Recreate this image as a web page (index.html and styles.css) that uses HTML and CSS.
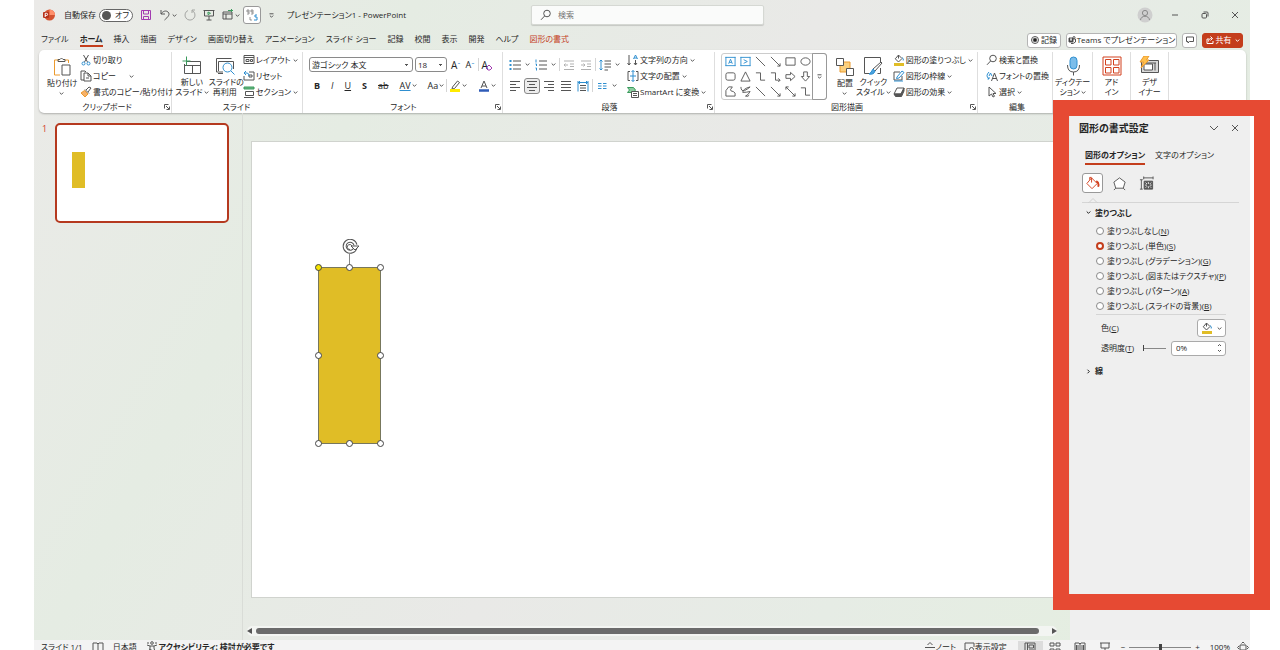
FILE: index.html
```
<!DOCTYPE html>
<html lang="ja">
<head>
  <meta charset="UTF-8">
  <title>プレゼンテーション1 - PowerPoint</title>
  <link rel="stylesheet" href="styles.css">
</head>
<body>
  <!-- 共通アイコン -->
  <svg class="defs" aria-hidden="true">
    <symbol id="chev" viewBox="0 0 5 5"><path d="M.7 1.5l1.8 1.8 1.8-1.8" /></symbol>
    <symbol id="launch" viewBox="0 0 6 6"><path d="M.5 4.5v-4h4M2 2l3 3M5.5 2.5v3h-3" /></symbol>
    <symbol id="search" viewBox="0 0 12 12"><circle cx="7" cy="4.5" r="3.3" /><path d="M4.6 7L1 10.8" /></symbol>
    <symbol id="bucket" viewBox="0 0 12 12"><path d="M5.5 1L9 4.5 5.5 8 2.3 4.8zM5.5 1v3.5" /><path class="b" d="M9 3.5q2 1 1.2 3" /><path class="gold" d="M1 10.5h10" /></symbol>
    <symbol id="line" viewBox="0 0 12 12"><path d="M1 1l10 10" /></symbol>
    <symbol id="arrow" viewBox="0 0 12 12"><path d="M1 1l10 10M11 8v3H8" /></symbol>
    <symbol id="elbow" viewBox="0 0 12 12"><path d="M1 2h5v8h5" /></symbol>
  </svg>

  <div class="app">
    <header class="titlebar">
      <svg class="logo" viewBox="0 0 12 12"><circle cx="6.5" cy="6" r="5.5" fill="#d35230" stroke="none" /><path d="M6.5.5A5.5 5.5 0 0 1 12 6H6.5z" fill="#ff8f6b" stroke="none" /><rect x="0" y="3" width="6" height="6" rx="1" fill="#b7321a" stroke="none" /><path d="M2.2 8V4.3h1.3a1 1 0 0 1 0 2.2H2.2" stroke="#fff" /></svg>
      <span class="autosave">自動保存</span>
      <button class="switch"><i></i>オフ</button>
      <div class="quick">
        <button title="保存"><svg class="i12" viewBox="0 0 12 12"><path class="v" d="M1.5 1.5h9v9h-9zM3.500 1.500v3.500h5V1.500M3.500 10.500V7.500h5v3" /></svg></button>
        <button title="元に戻す"><svg class="i12" viewBox="0 0 12 12"><path d="M2 1v4h4M2 5c2-3 5-3.800 7-2 2.500 2.400 0 5-3.500 8" /></svg><svg class="c"><use href="#chev" /></svg></button>
        <button title="やり直し"><svg class="i12 dim" viewBox="0 0 12 12"><path d="M4 1.500A5 5 0 1 0 8 1.500M8 4V1h3" /></svg></button>
        <button title="最初から"><svg class="i12" viewBox="0 0 12 12"><path d="M.5 1.500h11M1.500 1.500v5.500h9V1.500M6 7v4M3.500 11h5" /><path class="g" d="M5 3l2.500 1.300L5 5.600z" /></svg></button>
        <button title="図形"><svg class="i12" viewBox="0 0 12 12"><path d="M1 3h9v7H1zM1 5h9M4 5v5" /><path class="g" d="M6 1.500h5M9.500 0v3" /></svg><svg class="c"><use href="#chev" /></svg></button>
        <button class="boxed" title="置換"><svg class="i12" viewBox="0 0 12 12"><path opacity=".6" d="M1 1h2v2H1zM3 3v2H1M5 1h2v2H5zM7 3v2H5M4 8v3h2" /><path class="b" d="M11 6H9v2h2v3H8" /></svg></button>
        <svg class="c" viewBox="0 0 5 5"><path d="M.5.8h4M.9 2.600l1.600 1.600 1.600-1.600" /></svg>
      </div>
      <span class="doc">プレゼンテーション1 - PowerPoint</span>
      <label class="search"><svg class="i12"><use href="#search" /></svg><input type="text" placeholder="検索" aria-label="検索"></label>
      <div class="window">
        <svg class="user" viewBox="0 0 16 16"><circle cx="8" cy="8" r="7.500" fill="#cfcfcf" stroke="none" /><circle cx="8" cy="6" r="2.600" /><path d="M3.500 13c.5-5 8.500-5 9 0" /></svg>
        <button title="最小化"><svg class="i8" viewBox="0 0 8 8"><path d="M1 4h6" /></svg></button>
        <button title="元のサイズ"><svg class="i8" viewBox="0 0 8 8"><rect x="1" y="2.500" width="4.500" height="4.500" rx="1" /><path d="M2.500 1h3.500q1 0 1 1v3.500" /></svg></button>
        <button title="閉じる"><svg class="i8" viewBox="0 0 8 8"><path d="M1 1l6 6M7 1L1 7" /></svg></button>
      </div>
    </header>

    <nav class="tabs">
      <a href="#">ファイル</a><a href="#" class="on">ホーム</a><a href="#">挿入</a><a href="#">描画</a><a href="#">デザイン</a><a href="#">画面切り替え</a><a href="#">アニメーション</a><a href="#">スライド ショー</a><a href="#">記録</a><a href="#">校閲</a><a href="#">表示</a><a href="#">開発</a><a href="#">ヘルプ</a><a href="#" class="ctx">図形の書式</a>
      <div class="actions">
        <button class="rec"><svg class="i8" viewBox="0 0 8 8"><circle cx="4" cy="4" r="3.500" /><circle cx="4" cy="4" r="1.800" fill="#222" /></svg>記録</button>
        <button class="teams"><svg class="i8" viewBox="0 0 8 8"><path fill="#333" d="M1 2h4v4H1z" /><circle cx="6" cy="1.500" r="1" /><path d="M5 3h2.500v3L5 7.500H3" /><path stroke="#fff" d="M2 3h2M3 3v2" /></svg>Teams でプレゼンテーション</button>
        <button class="note"><svg class="i8" viewBox="0 0 8 8"><path d="M.5 1h7v4.500H3.500L2 7V5.500H.5z" /></svg></button>
        <button class="share"><svg class="i8" viewBox="0 0 8 8"><path d="M3 3H1v4.500h6V5M2.500 5.500c0-2 1-3 3-3M4.500.5l2 2-2 2" /></svg>共有<svg class="c"><use href="#chev" /></svg></button>
      </div>
    </nav>

    <section class="ribbon">
      <div class="group clip">
        <div class="body">
          <button class="big"><svg viewBox="0 0 20 20"><path class="o" d="M7 3H2.500v15H8M13 3h3.500v3" /><path d="M6 4.500V2.500h2q1.500-3 3 0h2v2z" /><path d="M10 8h8v10h-8z" fill="#fff" /></svg>貼り付け<svg class="c"><use href="#chev" /></svg></button>
          <div class="stack">
            <button><svg class="i12" viewBox="0 0 12 12"><path d="M3.500 1l4 7M8.500 1l-4 7" /><circle class="b" cx="3.500" cy="9.500" r="1.500" /><circle class="b" cx="8.500" cy="9.500" r="1.500" /></svg>切り取り</button>
            <button><svg class="i12" viewBox="0 0 12 12"><path d="M4 10H1V1h4l1 1M4 3h4l3 3v5H4zM8 3v3h3M6 8h3" /></svg>コピー<svg class="c far"><use href="#chev" /></svg></button>
            <button><svg class="i12" viewBox="0 0 12 12"><path d="M6 4l3-3 2 1-3 4M5 3.500l4 4" /><path class="o" fill="#f6b26b" d="M4.500 4.500l3.500 3.500-3 3L1 7z" /></svg>書式のコピー/貼り付け</button>
          </div>
        </div>
        <footer>クリップボード<svg class="l"><use href="#launch" /></svg></footer>
      </div>

      <div class="group slides">
        <div class="body">
          <button class="big"><svg viewBox="0 0 20 20"><path d="M4 5.500h14.500v12h-16V8M3 9.500h15.500M10.500 9.500v8" /><path class="g" d="M4.500.5v9M.5 5h8" /></svg>新しい<br>スライド<svg class="c in"><use href="#chev" /></svg></button>
          <button class="big"><svg viewBox="0 0 20 20"><path d="M8 16H1.500V5M1.500 5V2.500h15M3.500 15V5.500h15V13M8 17.500H3" /><circle class="b" cx="12.500" cy="11.500" r="4.500" /><path class="b" d="M16 15l3.500 3.500" /></svg>スライドの<br>再利用</button>
          <div class="stack">
            <button><svg class="i12" viewBox="0 0 12 12"><path d="M1 1.500h10v8H1zM1 3.500h10M3 5.500h3v2H3zM7.500 5.500h2v2h-2z" /></svg>レイアウト<svg class="c"><use href="#chev" /></svg></button>
            <button><svg class="i12" viewBox="0 0 12 12"><path d="M6 2h5v8H1V6M6 5h3v2H6z" /><path class="b" d="M3 1L1 3l2 2M1 3h3q2 0 2 3" /></svg>リセット</button>
            <button><svg class="i12" viewBox="0 0 12 12"><path class="g" d="M1 1h10v2H1z" fill="#6ab884" /><path d="M2.500 5.500h8v4h-8zM1 11.500h10" /></svg>セクション<svg class="c"><use href="#chev" /></svg></button>
          </div>
        </div>
        <footer>スライド</footer>
      </div>

      <div class="group font">
        <div class="rows">
          <div class="row">
            <select class="family" aria-label="フォント"><option>游ゴシック 本文</option></select>
            <select class="size" aria-label="サイズ"><option>18</option></select>
            <button class="t lg">A<sup>ˆ</sup></button>
            <button class="t">A<sup>ˇ</sup></button>
            <hr>
            <button class="t lg clear">A<svg class="i8" viewBox="0 0 8 8"><path class="v" d="M1 5l3-3 3 3-2 2H3z" /></svg></button>
          </div>
          <div class="row marks">
            <button class="t"><b>B</b></button>
            <button class="t"><em>I</em></button>
            <button class="t"><u>U</u></button>
            <button class="t"><b>S</b></button>
            <button class="t"><s>ab</s></button>
            <button class="t under">AV<svg class="c"><use href="#chev" /></svg></button>
            <button class="t">Aa<svg class="c"><use href="#chev" /></svg></button>
            <hr>
            <button class="t"><svg class="i12" viewBox="0 0 12 12"><path d="M3.500 7l5-6 2 1.500-5 6-2.500.5z" /><path d="M1 10.500h10" stroke="#ffeb00" stroke-width="3" /></svg><svg class="c"><use href="#chev" /></svg></button>
            <button class="t"><svg class="i12" viewBox="0 0 12 12"><path d="M3 8l3-7 3 7M4 6h4" /><path d="M1 10.500h10" stroke="#2f5bb7" stroke-width="2.500" /></svg><svg class="c"><use href="#chev" /></svg></button>
          </div>
        </div>
        <footer>フォント<svg class="l"><use href="#launch" /></svg></footer>
      </div>

      <div class="group para">
        <div class="body">
          <div class="rows">
            <div class="row">
              <button><svg class="i12" viewBox="0 0 12 12"><path d="M4 2h8M4 6h8M4 10h8" /><path class="b fat" d="M.5 2h2M.5 6h2M.5 10h2" /></svg><svg class="c"><use href="#chev" /></svg></button>
              <button><svg class="i12" viewBox="0 0 12 12"><path d="M4 2h8M4 6h8M4 10h8" /><path class="b" d="M1 .5v3M.5 5h1v2M.5 9h1v2.500" /></svg><svg class="c"><use href="#chev" /></svg></button>
              <hr>
              <button><svg class="i12 dim" viewBox="0 0 12 12"><path d="M1 2h10M7 5h4M7 7.500h4M1 10.500h10M5 6H1M2.500 4.500L1 6l1.500 1.500" /></svg></button>
              <button><svg class="i12 dim" viewBox="0 0 12 12"><path d="M1 2h10M7 5h4M7 7.500h4M1 10.500h10M1 6h4M3.500 4.500L5 6 3.500 7.500" /></svg></button>
              <hr>
              <button><svg class="i12" viewBox="0 0 12 12"><path d="M5.500 2H12M5.500 5H12M5.500 8H12M5.500 11H9" /><path class="b" d="M2 1v10M.5 2.500L2 1l1.500 1.500M.5 9.500L2 11l1.500-1.500" /></svg><svg class="c"><use href="#chev" /></svg></button>
            </div>
            <div class="row">
              <button><svg class="i12" viewBox="0 0 12 12"><path d="M1 1.500h10M1 4.500h6M1 7.500h10M1 10.500h6" /></svg></button>
              <button class="pressed"><svg class="i12" viewBox="0 0 12 12"><path d="M1 1.500h10M3 4.500h6M1 7.500h10M3 10.500h6" /></svg></button>
              <button><svg class="i12" viewBox="0 0 12 12"><path d="M1 1.500h10M5 4.500h6M1 7.500h10M5 10.500h6" /></svg></button>
              <button><svg class="i12" viewBox="0 0 12 12"><path d="M1 1.500h10M1 4.500h10M1 7.500h10M1 10.500h10" /></svg></button>
              <button><svg class="i12" viewBox="0 0 12 12"><path d="M3 5.500h6M3 8h6M3 10.500h6" /><path class="b" d="M1 1v10.500M11 1v10.500M1 2.500h10M3 1L1.500 2.500 3 4M9 1l1.500 1.500L9 4" /></svg></button>
              <hr>
              <button><svg class="i12" viewBox="0 0 12 12"><path class="b" d="M2 3.500h3.500M7 3.500h3.500M2 6h3.500M7 6h3.500M2 8.500h3.500M7 8.500h3.500" /></svg><svg class="c"><use href="#chev" /></svg></button>
            </div>
          </div>
          <div class="stack">
            <button><svg class="i12" viewBox="0 0 12 12"><path d="M2 1v10M.5 9L2 11l1.500-2M8.500 6v5M7 9l1.500 2L10 9" /><path class="b" d="M6.500 5l2-4 2 4M7 4h3" /></svg>文字列の方向<svg class="c"><use href="#chev" /></svg></button>
            <button><svg class="i12" viewBox="0 0 12 12"><path d="M3 1.500H1v9h2M9 1.500h2v9H9" /><path class="b" d="M6 .5v11M3 6h6M4.500 2L6 .5 7.500 2M4.500 10L6 11.500 7.500 10" /></svg>文字の配置<svg class="c"><use href="#chev" /></svg></button>
            <button><svg class="i12" viewBox="0 0 12 12"><path class="g" fill="#8bcda0" d="M.5 1.500h6l2 2.500-2 2.500h-6l2-2.500z" /><path fill="#fff" d="M4.500 5.500h7v6h-7z" /><path d="M6 7.500h4M6 9.500h4" /></svg>SmartArt に変換<svg class="c"><use href="#chev" /></svg></button>
          </div>
        </div>
        <footer>段落<svg class="l"><use href="#launch" /></svg></footer>
      </div>

      <div class="group draw">
        <div class="body">
          <div class="gallery">
            <div class="shapes">
              <svg viewBox="0 0 12 12"><path class="b" d="M.5 1.500h11M.5 10.500h11M1 1v10M11 1v10M4 8.500L6 3.500l2 5M4.700 7h2.600" /></svg>
              <svg viewBox="0 0 12 12"><path class="b" d="M.5 1.500h11M.5 10.500h11M1 1v10M11 1v10M4 4l4 2-4 2" /></svg>
              <svg><use href="#line" /></svg>
              <svg><use href="#arrow" /></svg>
              <svg viewBox="0 0 12 12"><path d="M1 2h10v8H1z" /></svg>
              <svg viewBox="0 0 12 12"><ellipse cx="6" cy="6" rx="5" ry="4" /></svg>
              <svg viewBox="0 0 12 12"><rect x="1" y="2" width="10" height="8" rx="2" /></svg>
              <svg viewBox="0 0 12 12"><path d="M6 1l5 10H1z" /></svg>
              <svg><use href="#elbow" /></svg>
              <svg viewBox="0 0 12 12"><path d="M1 2h5v8h5M9 8l2 2-2 2" /></svg>
              <svg viewBox="0 0 12 12"><path d="M1 4h5V1.500L11 6l-5 4.500V8H1z" /></svg>
              <svg viewBox="0 0 12 12"><path d="M4 1h4v5h2.500L6 11 1.500 6H4z" /></svg>
              <svg viewBox="0 0 12 12"><path d="M1 11V5l3-4h4L6 4q0 2 3 2 3 1 2 5z" /></svg>
              <svg viewBox="0 0 12 12"><path d="M1 1q0 5 4 4 4-2 6-4-8 2-8 6 4 0 8-1-2 4-5 5 3 1 4-1" /></svg>
              <svg><use href="#line" /></svg>
              <svg><use href="#arrow" /></svg>
              <svg viewBox="0 0 12 12"><path d="M1 1l10 10M11 8v3H8M1 4V1h3" /></svg>
              <svg><use href="#elbow" /></svg>
            </div>
            <button title="その他"><svg class="c" viewBox="0 0 5 5"><path d="M.5.8h4M.9 2.600l1.600 1.600 1.600-1.600" /></svg></button>
          </div>
          <button class="big"><svg viewBox="0 0 20 20"><path class="o" fill="#fbcf7d" d="M5 5h10v10H5z" /><path fill="#fff" d="M1.500 1.500h7v7h-7zM11.500 11.500h7v7h-7z" /></svg>配置<svg class="c"><use href="#chev" /></svg></button>
          <button class="big"><svg viewBox="0 0 20 20"><path d="M7 17.500H1.500v-16h16v5M17.500 12v5.500h-3" /><path d="M19 7l-7 8-2-2 8-7z" fill="#fff" /><path class="b" fill="#4aa3e0" d="M10 13l2 2q-1 4-6 3 2-1 4-5z" /></svg>クイック<br>スタイル<svg class="c in"><use href="#chev" /></svg></button>
          <div class="stack">
            <button><svg class="i12"><use href="#bucket" /></svg>図形の塗りつぶし<svg class="c"><use href="#chev" /></svg></button>
            <button><svg class="i12" viewBox="0 0 12 12"><path d="M7 2H1v8h8V6" /><path class="b" d="M4 7l5-6 2 1.500-5 5.500-2.500.5zM1 11h9" /></svg>図形の枠線<svg class="c"><use href="#chev" /></svg></button>
            <button><svg class="i12" viewBox="0 0 12 12"><path d="M4 2h7l-3 6H1z" /><path fill="#555" d="M1 8h7l3-6v3L8.500 10.500h-6z" /></svg>図形の効果<svg class="c"><use href="#chev" /></svg></button>
          </div>
        </div>
        <footer>図形描画<svg class="l"><use href="#launch" /></svg></footer>
      </div>

      <div class="group edit">
        <div class="body">
          <div class="stack">
            <button><svg class="i12"><use href="#search" /></svg>検索と置換</button>
            <button><svg class="i12" viewBox="0 0 12 12"><path d="M5.500 11l3-8 3 8M6.500 8.500h4" /><path class="b" d="M3 2Q-1 6 3 9M1.500 9H3V7M3 6l1.500-3L6 6" /></svg>フォントの置換</button>
            <button><svg class="i12" viewBox="0 0 12 12"><path d="M3 1v9l2.500-2L7 11l1.500-.7L7 7.500h3z" /></svg>選択<svg class="c"><use href="#chev" /></svg></button>
          </div>
        </div>
        <footer>編集</footer>
      </div>

      <div class="group solo">
        <button class="big"><svg viewBox="0 0 20 20"><rect class="b" x="7" y="1" width="7" height="12" rx="3.500" fill="#7cbdea" /><path d="M4.500 9q0 7 6 7t6-7M10.500 16v3.500" /></svg>ディクテー<br>ション<svg class="c in"><use href="#chev" /></svg></button>
      </div>
      <div class="group solo narrow">
        <button class="big"><svg viewBox="0 0 20 20"><path class="r" d="M1 1h18v18H1zM3.500 3.500H9V9H3.500zM11.500 3.500H17V9h-5.500zM3.500 11.500H9V17H3.500zM11.500 11.500H17V17h-5.500z" /></svg>アド<br>イン</button>
      </div>
      <div class="group solo narrow">
        <button class="big"><svg viewBox="0 0 20 20"><path fill="#d9d9d9" d="M2.500 4.500h17v12h-17z" /><path fill="#fff" d="M5 8h8.500v6H5zM16 7v7.500M5 7h12" /><path class="o" fill="#ffc04d" d="M5 0h5L7.500 4H10l-8 8 2.500-6H1z" /></svg>デザ<br>イナー</button>
      </div>
    </section>

    <main class="workspace">
      <aside class="thumbs">
        <span>1</span>
        <div class="thumb"><i></i></div>
      </aside>
      <section class="editor">
        <div class="slide">
          <div class="shape">
            <svg class="rotate" viewBox="0 0 18 16"><path class="halo" d="M13.500 8.500A5.500 5.500 0 1 1 13.500 6" /><path class="core" d="M13.500 8.500A5.500 5.500 0 1 1 13.500 6" /><path fill="#fff" d="M9 7h8l-4 4z" /><path d="M8 10.500A2.500 2.500 0 1 1 10 7" /></svg>
            <i class="n w adj"></i><i class="n m"></i><i class="n e"></i>
            <i class="mid w"></i><i class="mid e"></i>
            <i class="s w"></i><i class="s m"></i><i class="s e"></i>
          </div>
        </div>
        <div class="scroll">
          <svg viewBox="0 0 5 6"><path fill="#555" d="M5 0v6L0 3z" stroke="none" /></svg>
          <div class="bar"></div>
          <svg viewBox="0 0 5 6"><path fill="#555" d="M0 0v6l5-3z" stroke="none" /></svg>
        </div>
      </section>

      <aside class="pane">
        <div class="pane-head">
          <h2>図形の書式設定</h2>
          <button><svg class="i8" viewBox="0 0 8 8"><path d="M0 2l4 4 4-4" /></svg></button>
          <button><svg class="i8" viewBox="0 0 8 8"><path d="M1 1l6 6M7 1L1 7" /></svg></button>
        </div>
        <div class="pane-tabs">
          <button class="on">図形のオプション</button>
          <button>文字のオプション</button>
        </div>
        <div class="pane-icons">
          <button class="on"><svg viewBox="0 0 16 16"><path class="r" d="M7 2l6 6-5.500 5.500L2 8zM7 2v5M5 4V1.500h2" /><path d="M12 5.500q3.500 2 2 6" stroke="#d2401f" stroke-width="2" /></svg></button>
          <button><svg viewBox="0 0 16 16"><path fill="#fff" d="M8 2l6 4.500L12 13H4L2 6.500z" /><path d="M2 15l2-2M14 15l-2-2" /></svg></button>
          <button><svg viewBox="0 0 16 16"><path d="M2.500 4v10M1 4h3M1 14h3M5 2h10M5 .5v3M15 .5v3" /><path fill="#555" d="M5.500 5.500h9v8.500h-9z" /><path stroke="#eee" d="M10 6.500v2M10 11v2M6.500 9.700h2M11.500 9.700h2M7 7l1.500 1.500M13 7l-1.500 1.500M7 12.500L8.500 11M13 12.500L11.500 11" /></svg></button>
        </div>
        <svg class="notch" viewBox="0 0 10 5"><path d="M0 4.500h1l4-4 4 4h1" /></svg>
        <h3><svg class="c"><use href="#chev" /></svg>塗りつぶし</h3>
        <div class="radios">
          <label><input type="radio" name="fill">塗りつぶしなし(<u>N</u>)</label>
          <label><input type="radio" name="fill" checked>塗りつぶし (単色)(<u>S</u>)</label>
          <label><input type="radio" name="fill">塗りつぶし (グラデーション)(<u>G</u>)</label>
          <label><input type="radio" name="fill">塗りつぶし (図またはテクスチャ)(<u>P</u>)</label>
          <label><input type="radio" name="fill">塗りつぶし (パターン)(<u>A</u>)</label>
          <label><input type="radio" name="fill">塗りつぶし (スライドの背景)(<u>B</u>)</label>
        </div>
        <div class="field">
          <label for="color">色(<u>C</u>)</label>
          <button id="color"><svg class="i12"><use href="#bucket" /></svg><svg class="c"><use href="#chev" /></svg></button>
        </div>
        <div class="field">
          <label for="alpha">透明度(<u>T</u>)</label>
          <input type="range" id="alpha" value="0">
          <span class="spin"><input type="text" value="0%" aria-label="透明度"><svg viewBox="0 0 5 10"><path d="M1 3l1.500-1.500L4 3M1 7l1.500 1.500L4 7" /></svg></span>
        </div>
        <h3 class="closed"><svg class="c"><use href="#chev" /></svg>線</h3>
      </aside>
    </main>

    <footer class="status">
      <span>スライド 1/1</span>
      <svg class="i12" viewBox="0 0 12 12"><path d="M1 2h4l1 1 1-1h4v8H7l-1 1-1-1H1zM6 3v6" /></svg>
      <span>日本語</span>
      <span class="a11y"><svg class="i12" viewBox="0 0 12 12"><circle cx="6" cy="2" r="1.300" /><path d="M1 4l3 1v2l-1 4M11 4L8 5v2l1 4M4 5h4M4 8l4 3M1 2h2M9 2h2" /></svg>アクセシビリティ: 検討が必要です</span>
      <div class="views">
        <button class="notes"><svg class="i12" viewBox="0 0 12 12"><path d="M1 6.500h10M1 9.500h10M3.500 4L6 1.500 8.500 4" /></svg>ノート</button>
        <button class="disp"><svg class="i12" viewBox="0 0 12 12"><path d="M5 9H2V2h9v4M1 11h4" /><circle cx="8.500" cy="8.500" r="2" /></svg>表示設定</button>
        <button class="on"><svg class="i12" viewBox="0 0 12 12"><path d="M1 2h10v9H1zM3.500 2v9M5 4h4.500v3H5zM5 9h5" /></svg></button>
        <button><svg class="i12" viewBox="0 0 12 12"><path d="M1 2h4v3H1zM7 2h4v3H7zM1 8h4v3H1zM7 8h4v3H7z" /></svg></button>
        <button><svg class="i12" viewBox="0 0 12 12"><path d="M1 2h4l1 1 1-1h4v8H7l-1 1-1-1H1zM6 3v8M2.500 4v5M4 4v5M8 4v5M9.500 4v5" /></svg></button>
        <button><svg class="i12" viewBox="0 0 12 12"><path d="M1 2h10M2 2v5h8V2M6 7v4M4 11h4" /></svg></button>
        <div class="zoom"><span>−</span><input type="range" value="50" aria-label="ズーム"><span>+</span></div>
        <span class="pct">100%</span>
        <svg class="i12" viewBox="0 0 12 12"><path d="M3 4h6v5H3zM4.500 2.500L6 1l1.500 1.500M2 5L.5 6.500 2 8M10 5l1.500 1.500L10 8M4.500 10.500L6 12l1.500-1.500" /></svg>
      </div>
    </footer>

    <!-- 注目箇所の赤枠 -->
    <div class="callout"></div>
  </div>
</body>
</html>
```
FILE: styles.css
```
* {
  box-sizing: border-box;
}

body {
  margin: 0;
  padding: 0 30px 0 34px;
  background: #fff;
  font-family: "Open Sans", "Noto Sans CJK JP", sans-serif;
  font-feature-settings: "palt";
  font-size: 8px;
  line-height: 10px;
  color: #262626;
  overflow: hidden;
}

button, input, select {
  font: inherit;
  font-feature-settings: inherit;
  color: inherit;
  margin: 0;
}

button {
  display: flex;
  align-items: center;
  padding: 0;
  border: none;
  background: none;
  white-space: nowrap;
}

a {
  color: inherit;
  text-decoration: none;
}

h2, h3 {
  margin: 0;
}

/* アイコン */
svg {
  flex: none;
  fill: none;
  stroke: #555;
  stroke-width: 1;
}

.defs {
  position: absolute;
  width: 0;
  height: 0;
}

.b { stroke: #2f8fd0; }
.g { stroke: #3a9b5c; }
.o { stroke: #eb9a2f; }
.v { stroke: #a23bb0; }
.r { stroke: #d2401f; }
.gold { stroke: #e0bd26; stroke-width: 3; }
.fat { stroke-width: 2; }
.dim { opacity: 0.45; }

.i12 { width: 12px; height: 12px; }
.i8 { width: 8px; height: 8px; }
.c { width: 5px; height: 5px; margin-left: 4px; }
.l { width: 6px; height: 6px; }

.app {
  position: relative;
  display: flex;
  flex-direction: column;
  height: 100vh;
  background: linear-gradient(120deg, #ebeae8 0%, #e5ece3 24%, #e9e9e7 50%, #e6ece5 72%, #e4efdf 100%);
}

/* タイトルバー */
.titlebar {
  flex: none;
  display: flex;
  align-items: center;
  height: 30px;
  padding: 0 9px;
}

.logo {
  width: 12px;
  height: 12px;
}

.autosave {
  width: 31px;
  margin: 0 4px 0 9px;
  white-space: nowrap;
}

.switch {
  width: 34px;
  height: 13px;
  gap: 4px;
  padding: 0 2px;
  border: 1px solid #666;
  border-radius: 7px;
  background: #fff;
}

.switch i {
  width: 9px;
  height: 9px;
  border-radius: 50%;
  background: #555;
}

.quick {
  display: flex;
  align-items: center;
  gap: 7px;
  width: 140px;
  margin-left: 7px;
}

.quick .c {
  margin-left: 1px;
}

.quick .boxed {
  justify-content: center;
  width: 18px;
  height: 18px;
  margin-left: -4px;
  border: 1px solid #999;
  border-radius: 3px;
  background: #fff;
}

.doc {
  width: 244px;
  margin-left: 7px;
}

.search {
  display: flex;
  align-items: center;
  gap: 6px;
  width: 233px;
  height: 20px;
  padding: 0 8px;
  border: 1px solid #d5d8d3;
  border-radius: 2px;
  background: #fafbfa;
  box-shadow: 0 1px 1px rgba(0, 0, 0, 0.15);
}

.search input {
  width: 100%;
  padding: 0;
  border: none;
  outline: none;
  background: none;
}

.window {
  display: flex;
  align-items: center;
  gap: 22px;
  margin-left: auto;
  padding-right: 2px;
}

.user {
  width: 16px;
  height: 16px;
  margin-right: -4px;
  stroke: #888;
}

/* タブ */
.tabs {
  flex: none;
  display: flex;
  align-items: center;
  gap: 11px;
  height: 20px;
  padding: 0 7px;
  white-space: nowrap;
}

.tabs a {
  line-height: 12px;
  border-bottom: 2px solid transparent;
}

.tabs .on {
  font-weight: bold;
  border-color: #c43e1c;
}

.tabs .ctx {
  color: #c43e1c;
}

.actions {
  display: flex;
  gap: 5px;
  margin-left: auto;
}

.actions button {
  height: 15px;
  padding: 0;
  gap: 1px;
  justify-content: center;
  border: 1px solid #b5b5b5;
  border-radius: 3px;
  background: #fff;
}

.actions .rec { width: 34px; gap: 2px; }
.actions .teams { width: 111px; }
.actions .note { width: 15px; }

.actions .share {
  width: 41px;
  gap: 2px;
  border-color: #c43e1c;
  background: #c43e1c;
  color: #fff;
}

.share svg { stroke: #fff; }
.share .c { margin-left: 1px; }

/* リボン */
.ribbon {
  flex: none;
  display: flex;
  height: 63px;
  margin: 0 4px 0 5px;
  padding: 2px 0 0;
  border-radius: 5px;
  background: #fff;
  box-shadow: 0 1px 2px rgba(0, 0, 0, 0.25);
}

.group {
  flex: none;
  display: flex;
  flex-direction: column;
  border-right: 1px solid #dedede;
  padding: 0 4px 0 8px;
}

.group footer {
  position: relative;
  display: flex;
  align-items: center;
  justify-content: center;
  height: 12px;
  margin-top: auto;
}

.group footer .l {
  position: absolute;
  right: -3px;
}

.body {
  display: flex;
}

.stack button {
  height: 16px;
  gap: 1px;
}

.stack .c { margin-left: 1px; }
.stack .far { margin-left: 12px; }

.big {
  display: block;
  height: 48px;
  text-align: center;
}

.big > svg:first-child {
  display: block;
  width: 20px;
  height: 20px;
  margin: 0 auto 1px;
}

.big .c {
  display: block;
  margin: 3px auto 0;
}

.big .in {
  display: inline-block;
  margin: 0 0 0 1px;
}

.clip { width: 133px; }
.clip .big { width: 29px; margin-right: 4px; }
.slides { width: 131px; padding-left: 3px; }
.slides .big { width: 36px; }
.slides .big + .big { width: 32px; }
.slides .stack { margin-left: 2px; }
.font { width: 200px; padding-left: 6px; }
.para { width: 212px; padding-left: 6px; }
.draw { width: 263px; padding-left: 6px; }
.edit { width: 75px; }
.solo { width: 40px; padding: 0; align-items: center; }
.narrow { width: 38px; }

.row {
  display: flex;
  align-items: center;
  height: 21px;
}

.rows {
  padding-top: 2px;
}

.row hr {
  flex: none;
  width: 1px;
  height: 13px;
  margin: 0 3px;
  border: none;
  background: #d5d5d5;
}

.row select {
  height: 15px;
  padding: 0 2px;
  border: 1px solid #8a8a8a;
  border-radius: 3px;
  appearance: none;
  background: linear-gradient(45deg, transparent 50%, #555 50%) right 5px center / 2px 2px no-repeat, linear-gradient(-45deg, transparent 50%, #555 50%) right 3px center / 2px 2px no-repeat, #fff;
}

.family { width: 104px; margin-right: 2px; }
.size { width: 32px; margin-right: 4px; }

.t {
  font-size: 9px;
}

.t.lg {
  font-size: 10px;
  margin-right: 5px;
}

.t sup {
  font-size: 8px;
  line-height: 0;
  color: #2f8fd0;
}

.t .c { margin-left: 1px; }

.font .row .lg:last-child {
  margin: 0;
}

.clear svg {
  margin: 4px 0 0 -3px;
}

.marks {
  gap: 11px;
  padding-left: 5px;
}

.marks hr {
  margin: 0 -9px;
}

.under {
  text-decoration: underline #2f8fd0;
}

.para .rows {
  width: 118px;
}

.para .row {
  gap: 5px;
}

.para .row hr {
  margin: 0 -2px;
}

.pressed {
  justify-content: center;
  width: 16px;
  height: 16px;
  margin: 0 -2px;
  border: 1px solid #888;
  border-radius: 3px;
  background: #ededed;
}

.gallery {
  display: flex;
  width: 108px;
  height: 47px;
  margin: 1px 7px 0 0;
  border: 1px solid #ccc;
  border-radius: 3px;
}

.shapes {
  flex: 1;
  display: grid;
  grid-template-columns: repeat(6, 15px);
  grid-auto-rows: 15px;
  place-items: center;
  padding-left: 1px;
}

.shapes svg {
  width: 11px;
  height: 11px;
}

.gallery button {
  width: 15px;
  justify-content: center;
  border: 1px solid #999;
  margin: -1px;
  border-radius: 0 3px 3px 0;
}

.gallery .c { margin: 0; }

.draw .big { width: 26px; }
.draw .big + .big { width: 38px; margin-right: 2px; }

/* 編集エリア */
.workspace {
  flex: 1;
  display: flex;
  min-height: 0;
}

.thumbs {
  display: flex;
  align-items: flex-start;
  gap: 8px;
  width: 209px;
  padding: 10px 8px;
  border-right: 1px solid #d9dcd7;
  font-size: 9px;
  line-height: 12px;
  color: #d2401f;
}

.thumb {
  width: 174px;
  height: 100px;
  padding: 27px 15px;
  border: 2px solid #b5391f;
  border-radius: 5px;
  background: #fff;
}

.thumb i {
  display: block;
  width: 13px;
  height: 36px;
  background: #e0bd26;
}

.editor {
  flex: 1;
  display: flex;
  flex-direction: column;
  padding: 28px 8px 4px;
}

.slide {
  flex: 1;
  padding: 125px 66px;
  border: 1px solid #d0d3ce;
  background: #fff;
}

.shape {
  position: relative;
  width: 63px;
  height: 177px;
  border: 1px solid #77775c;
  background: #e0bd26;
}

.shape::before {
  content: "";
  position: absolute;
  left: 30px;
  top: -14px;
  height: 14px;
  border-left: 1px solid #888;
}

.rotate {
  position: absolute;
  left: 23px;
  top: -29px;
  width: 18px;
  height: 16px;
}

.halo { stroke-width: 4; }
.core { stroke: #fff; stroke-width: 2; }

.shape i {
  position: absolute;
  width: 7px;
  height: 7px;
  border: 1px solid #444;
  border-radius: 50%;
  background: #fff;
}

.shape .n { top: -4px; }
.shape .mid { top: 84px; }
.shape .s { bottom: -4px; }
.shape .w { left: -4px; }
.shape .m { left: 27px; }
.shape .e { right: -4px; }
.shape .adj { background: #f5e400; }

.scroll {
  display: flex;
  align-items: center;
  gap: 4px;
  height: 10px;
  margin: 28px 5px 0 -4px;
  border-radius: 5px;
  background: #f3f5f2;
}

.scroll svg {
  width: 5px;
  height: 6px;
}

.scroll .bar {
  flex: 1;
  height: 6px;
  margin-right: 9px;
  border-radius: 3px;
  background: #6b6b6b;
}

/* 書式設定ウィンドウ */
.pane {
  width: 180px;
  padding: 6px 11px 0 9px;
  background: #efefef;
}

.pane-head {
  display: flex;
  align-items: center;
  gap: 13px;
  height: 18px;
}

.pane-head h2 {
  flex: 1;
  font-size: 10px;
  line-height: 14px;
}

.pane-tabs {
  display: flex;
  gap: 10px;
  margin: 10px 0 0 6px;
}

.pane-tabs button {
  height: 18px;
  border-bottom: 2px solid transparent;
}

.pane-tabs .on {
  font-weight: bold;
  border-color: #c43e1c;
}

.pane-icons {
  display: flex;
  gap: 6px;
  margin: 8px 0 0 3px;
}

.pane-icons button {
  justify-content: center;
  width: 21px;
  height: 20px;
  border: 1px solid transparent;
  border-radius: 3px;
}

.pane-icons .on {
  border-color: #999;
  background: #fff;
}

.pane-icons svg {
  width: 15px;
  height: 15px;
}

.notch {
  display: block;
  width: 10px;
  height: 5px;
  margin: 5px 0 -1px 9px;
  stroke: #d0d0d0;
}

.notch + h3 {
  border-top: 1px solid #d5d5d5;
}

.pane h3 {
  display: flex;
  align-items: center;
  gap: 4px;
  height: 20px;
  margin-left: 3px;
  font-size: 8px;
}

.pane h3 .c {
  stroke: #222;
}

.closed .c {
  transform: rotate(-90deg);
}

.radios {
  margin: 1px 13px 0 17px;
  border-bottom: 1px solid #d5d5d5;
  padding-bottom: 1px;
}

.radios label {
  display: flex;
  align-items: center;
  height: 15px;
  white-space: pre;
}

.radios input {
  flex: none;
  appearance: none;
  width: 8px;
  height: 8px;
  margin-right: 3px;
  border: 1px solid #8a8a8a;
  border-radius: 50%;
  background: #fff;
}

.radios input:checked {
  border: 2px solid #c43e1c;
}

.field {
  display: flex;
  align-items: center;
  height: 20px;
  margin: 3px 13px 0 22px;
}

.field + .field {
  margin-top: 0;
}

.field label {
  flex: 1;
  white-space: nowrap;
}

.field button {
  justify-content: center;
  width: 29px;
  height: 18px;
  border: 1px solid #aaa;
  border-radius: 3px;
  background: #fff;
}

#alpha {
  appearance: none;
  width: 23px;
  height: 1px;
  margin-right: 5px;
  background: #888;
}

#alpha::-webkit-slider-thumb {
  appearance: none;
  width: 1px;
  height: 6px;
  background: #444;
}

.spin {
  display: flex;
  align-items: center;
  width: 55px;
  height: 15px;
  padding: 0 3px 0 4px;
  border: 1px solid #aaa;
  border-radius: 3px;
  background: #fff;
}

.spin input {
  flex: 1;
  width: 20px;
  padding: 0;
  border: none;
  background: none;
}

.spin svg {
  width: 5px;
  height: 10px;
}

.pane .closed {
  margin-top: 3px;
}

/* ステータスバー */
.status {
  flex: none;
  display: flex;
  align-items: flex-start;
  gap: 9px;
  height: 10px;
  padding: 1px 1px 0 7px;
  background: #f3f3f3;
  line-height: 12px;
  white-space: nowrap;
}

.a11y {
  display: flex;
  gap: 1px;
  font-weight: bold;
}

.views {
  display: flex;
  margin-left: auto;
}

.views button {
  justify-content: center;
  width: 25px;
  height: 12px;
}

.views .on { background: #dcdcdc; }

.views .notes {
  justify-content: flex-start;
  width: 39px;
}

.views .disp {
  justify-content: flex-start;
  width: 55px;
}

.zoom {
  display: flex;
  align-items: center;
  gap: 4px;
  width: 82px;
  height: 12px;
  margin-left: 3px;
}

.zoom input {
  appearance: none;
  width: 62px;
  height: 1px;
  background: #888;
}

.zoom input::-webkit-slider-thumb {
  appearance: none;
  width: 3px;
  height: 7px;
  background: #444;
}

.pct {
  margin: 0 7px;
}

/* 赤枠 */
.callout {
  position: absolute;
  z-index: 5;
  top: 100px;
  right: -20px;
  width: 217px;
  height: 510px;
  border: 16px solid #e64a33;
}
```
